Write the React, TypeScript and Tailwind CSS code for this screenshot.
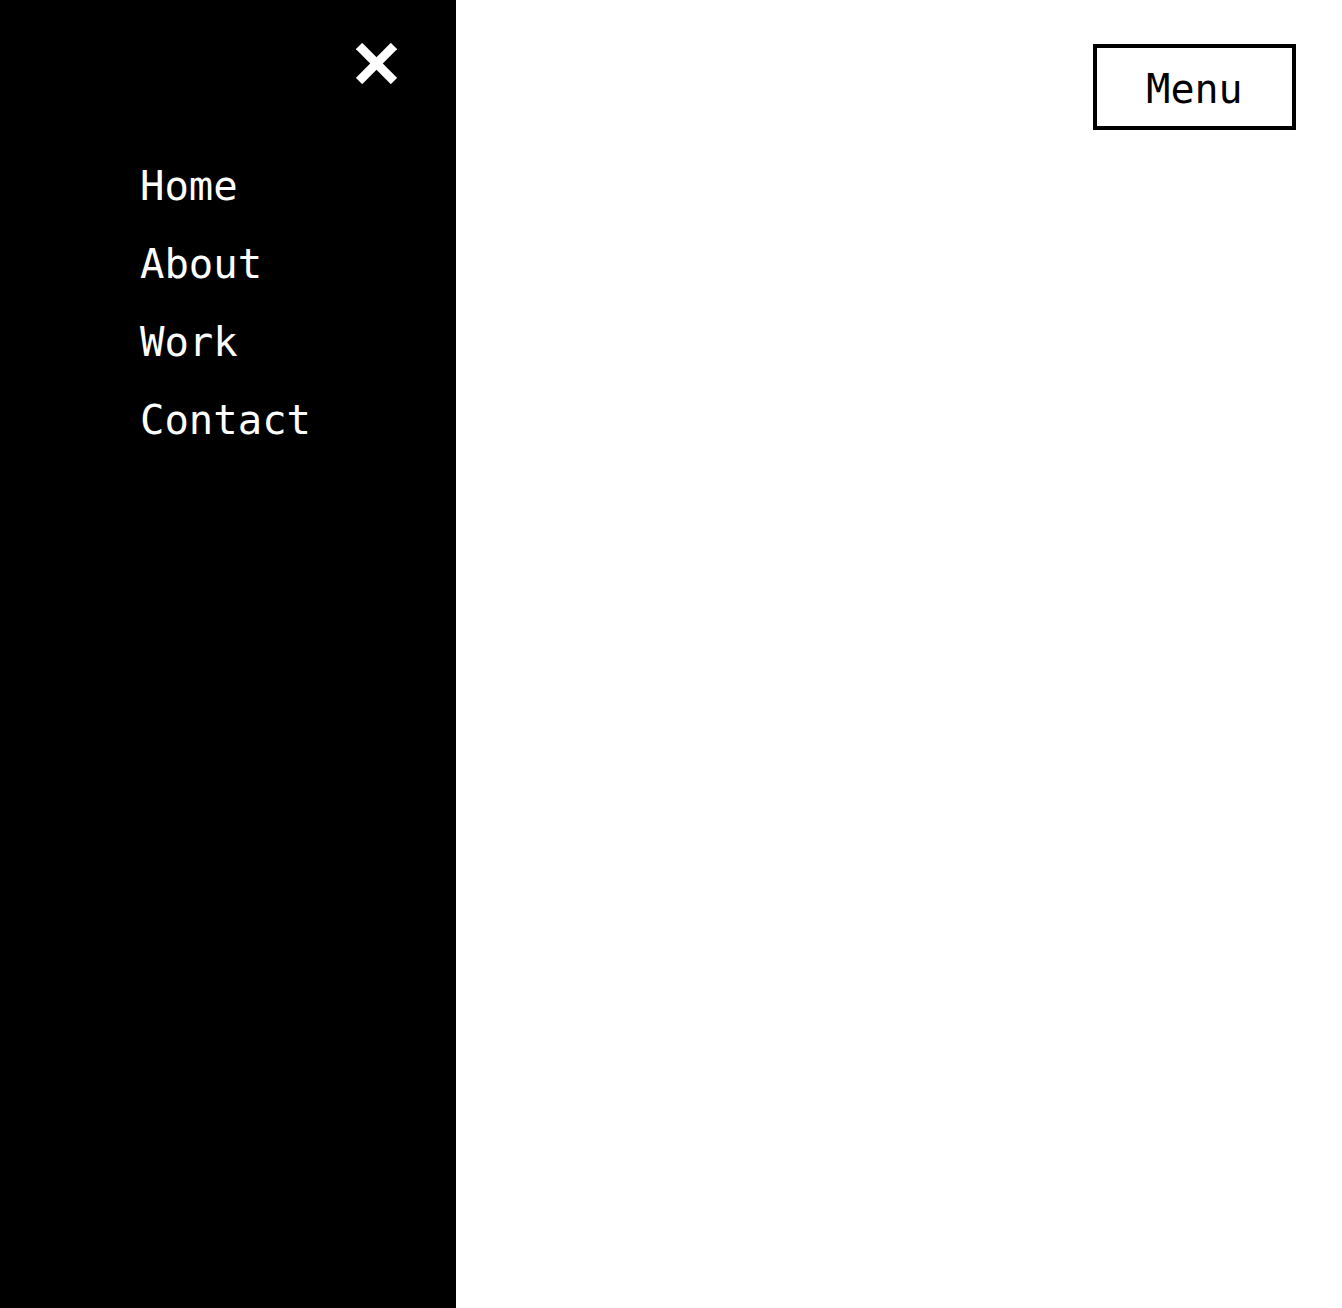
import React from "react";

export default function App() {
  const items = ["Home", "About", "Work", "Contact"];
  return (
    <div
      className="flex w-full h-[1308px] bg-white"
      style={{ fontFamily: '"DejaVu Sans Mono", "Liberation Mono", monospace' }}
    >
      <aside className="w-[456px] h-full bg-black text-white relative shrink-0">
        <div className="flex justify-end pt-[43px] pr-[59px]">
          <svg width="41" height="41" viewBox="0 0 41 41">
            <line x1="3" y1="3" x2="38" y2="38" stroke="white" strokeWidth="9" />
            <line x1="38" y1="3" x2="3" y2="38" stroke="white" strokeWidth="9" />
          </svg>
        </div>
        <nav className="pl-[140px] pt-[63px] flex flex-col">
          {items.map((t) => (
            <a key={t} className="text-[40.6px] leading-[78px] text-white">
              {t}
            </a>
          ))}
        </nav>
      </aside>
      <main className="flex-1 flex justify-end items-start pt-[44px] pr-[46px]">
        <button className="w-[203px] h-[86px] border-[4px] border-black text-black text-[40px] flex items-center justify-center pt-[4px]">
          Menu
        </button>
      </main>
    </div>
  );
}
